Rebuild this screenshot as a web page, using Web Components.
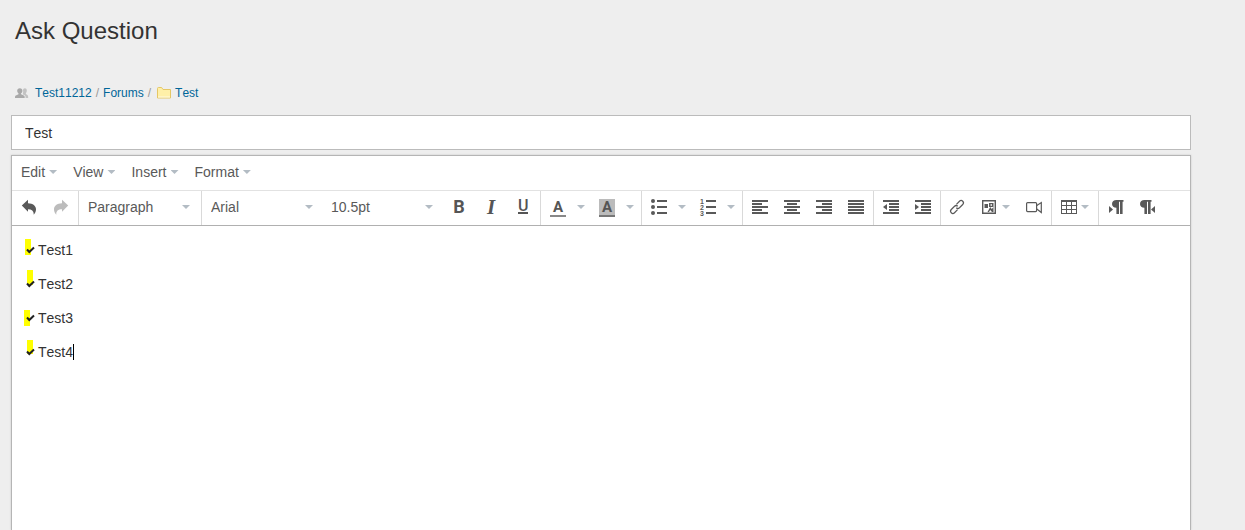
<!DOCTYPE html>
<html lang="en">
<head>
<meta charset="utf-8">
<title>Ask Question</title>
<style>
html, body { margin: 0; height: 100%; }
body { background: #eee; font-family: "Liberation Sans", Arial, sans-serif; font-kerning: none; color: #333; }
</style>
</head>
<body>
<ask-page></ask-page>
<script>
const define = (name, html, setup) => {
  const t = document.createElement('template');
  t.innerHTML = html;
  customElements.define(name, class extends HTMLElement {
    constructor() {
      super();
      this.attachShadow({ mode: 'open' });
    }
    connectedCallback() {
      if (this.shadowRoot.childNodes.length) return;
      this.shadowRoot.append(t.content.cloneNode(true));
      if (setup) setup(this, this.shadowRoot);
    }
  });
};

const bars = rows => '<path d="' + rows.map(([x, w], i) => `M${x} ${1 + i * 3}h${w}v2h-${w}z`).join('') + '"/>';
const undoPath = '<path d="M.8 6.500 7 .8v3.400c5 .1 8 2.600 8 6 0 2.200-.8 3.800-2.300 5.500.3-3.700-1.700-5.500-5.700-5.500v2.500z"/>';
const pilcrow = '<path d="M4.500 1H11.500v1.800H10.600V15H8V2.800H7V15H4.400V8.800C1.800 8.800 0 7.200 0 4.900S1.800 1 4.500 1z"/>';
const ICONS = {
  undo: undoPath,
  redo: `<g transform="matrix(-1 0 0 1 16 0)">${undoPath}</g>`,
  bullets: '<circle cx="2" cy="2" r="2"/><circle cx="2" cy="8" r="2"/><circle cx="2" cy="14" r="2"/><path d="M6 1h10v2H6zM6 7h10v2H6zM6 13h10v2H6z"/>',
  numbers: '<g font-size="7" font-weight="bold"><text x="0" y="5">1</text><text x="0" y="11">2</text><text x="0" y="17">3</text></g><path d="M6 1h10v2H6zM6 7h10v2H6zM6 13h10v2H6z"/>',
  left: bars([[0, 16], [0, 10], [0, 16], [0, 10], [0, 16]]),
  center: bars([[0, 16], [3, 10], [0, 16], [3, 10], [0, 16]]),
  right: bars([[0, 16], [6, 10], [0, 16], [6, 10], [0, 16]]),
  justify: bars([[0, 16], [0, 16], [0, 16], [0, 16], [0, 16]]),
  outdent: bars([[0, 16], [6, 10], [6, 10], [6, 10], [0, 16]]) + '<path d="M4 5v6L0 8z"/>',
  indent: bars([[0, 16], [6, 10], [6, 10], [6, 10], [0, 16]]) + '<path d="M0 5v6l4-3z"/>',
  link: '<g fill="none" stroke="#595959" stroke-width="1.200" transform="translate(-1) rotate(-45 8 8)"><path d="M6.500 10.300H2.200a2.300 2.300 0 0 1 0-4.600h4.600a2.300 2.300 0 0 1 2.200 2.300"/><path d="M9.500 5.700h4.300a2.300 2.300 0 0 1 0 4.600H9.200A2.300 2.300 0 0 1 7 8"/></g>',
  image: '<path d="M0 1h14v14H0zM1.400 2.400v11.200h11.200V2.400z" fill-rule="evenodd"/><path d="M2.500 5H6v4H2.500zM7 4h4.500v4H7zM8.500 5.300v1.400H10V5.300zM5.500 13l2.700-5 1.600 2 1.700-2v5h-1.500L8.200 11 7 13z" fill-rule="evenodd"/>',
  video: '<g fill="none" stroke="#595959" stroke-width="1.200"><rect x=".6" y="3.600" width="10" height="9" rx="1"/><path d="M10.800 6.500l4.500-3v10l-4.500-3.500"/></g>',
  table: '<path d="M0 1h16v14H0zM1 3v3h4V3zM6 3v3h4V3zM11 3v3h4V3zM1 7v3h4V7zM6 7v3h4V7zM11 7v3h4V7zM1 11v3h4v-3zM6 11v3h4v-3zM11 11v3h4v-3z" fill-rule="evenodd"/>',
  ltr: `<path d="M1 7v7l4-3.500z"/><g transform="translate(4)">${pilcrow}</g>`,
  rtl: `${pilcrow}<path d="M15 7v7l-4-3.500z"/>`,
  people: '<g fill="#a9a9a9"><circle cx="4.800" cy="5.800" r="2.600"/><path d="M3.500 7.500h2.600v1.700l2.700 1.300c.8.4.9 1 .9 2.500H0c0-1.500.1-2.100.9-2.500l2.600-1.300z"/></g><g fill="#c2c2c2"><path d="M8 5.200c0-1.300.8-2 1.900-2s1.900.8 1.900 2.200-.4 2-.9 2.600v1.100l1.500.9c.6.4.8 1.200.8 3h-2.600c0-1.600-.3-2.400-1.200-2.900L7.900 9.400V8.200C8.300 7.200 8.300 6.500 8 5.200z"/></g>',
  folder: '<path d="M2.500 3.500c0-.6.300-1 .9-1h3.200l1.400 2h7.500v8.500h-13z" fill="#fff0a8" stroke="#e5c766"/><path d="M3 11.500h12v1H3z" fill="#fffbe2"/>'
};

define('ui-icon', `<style>
:host { display: block; width: 16px; height: 16px; }
svg { display: block; fill: #595959; overflow: visible; }
</style><svg width="16" height="16" viewBox="0 0 16 16" aria-hidden="true"></svg>`, (el, root) => {
  root.querySelector('svg').innerHTML = ICONS[el.getAttribute('name')];
});

define('ui-caret', `<style>
:host { display: block; width: 8px; height: 4px; background: #b3bcc4; clip-path: polygon(0 0, 100% 0, 50% 100%); }
</style>`);

define('menu-button', `<style>
:host { display: block; }
button { display: flex; align-items: center; gap: 4px; margin: 0; padding: 0; border: 0; background: none; font: 14px/20px "Liberation Sans", Arial, sans-serif; font-kerning: none; color: #595959; }
</style><button type="button" aria-haspopup="true"><slot></slot><ui-caret></ui-caret></button>`);

/* Square icon button. "menu" adds a caret inside, "split" adds a separate caret button. */
define('tool-button', `<style>
:host { display: flex; height: 32px; }
button { display: flex; align-items: center; justify-content: center; margin: 0; padding: 0 8px; border: 0; background: none; color: #555; }
.main { gap: 4px; }
.open { width: 17px; padding: 0 6px 0 3px; }
:host([disabled]) .main { opacity: .4; }
[hidden] { display: none; }
</style><button class="main" type="button"><slot></slot><ui-caret class="inner" hidden></ui-caret></button><button class="open" type="button" hidden><ui-caret></ui-caret></button>`, (el, root) => {
  const label = el.getAttribute('label');
  const main = root.querySelector('.main'), open = root.querySelector('.open');
  main.setAttribute('aria-label', label);
  main.disabled = el.hasAttribute('disabled');
  open.setAttribute('aria-label', label + ' options');
  open.hidden = !el.hasAttribute('split');
  root.querySelector('.inner').hidden = !el.hasAttribute('menu');
});

define('letter-mark', `<style>
:host { display: block; width: 16px; text-align: center; font-family: Roboto, sans-serif; font-weight: 700; color: #555; }
span { display: block; box-sizing: border-box; }
.bold { font-size: 18px; line-height: 20px; }
.italic { font: italic 700 21px/20px "Liberation Serif", serif; }
.under { font-size: 16px; font-weight: 500; line-height: 12px; height: 14px; width: 10px; margin: 0 auto; border-bottom: 2px solid #555; }
.color, .fill { height: 18px; font-size: 15px; line-height: 16px; border-bottom: 2px solid #888; margin-top: 2px; }
.fill { background: #bbb; border-color: #777; }
</style><span><slot></slot></span>`, (el, root) => {
  root.querySelector('span').className = el.getAttribute('kind');
});

define('tool-select', `<style>
:host { display: grid; width: 120px; height: 32px; align-items: center; }
select, ui-caret { grid-area: 1 / 1; }
select { appearance: none; width: 100%; height: 32px; margin: 0; padding: 0 20px 0 8px; border: 0; background: none; font: 14px/20px "Liberation Sans", Arial, sans-serif; color: #595959; }
ui-caret { justify-self: end; margin-right: 10px; pointer-events: none; }
</style><select><option></option></select><ui-caret></ui-caret>`, (el, root) => {
  root.querySelector('select').setAttribute('aria-label', el.getAttribute('label'));
  root.querySelector('option').textContent = el.getAttribute('value');
});

define('tool-group', `<style>
:host { display: flex; padding: 0 1px 2px; border-right: 1px solid #d9d9d9; }
:host(:last-of-type) { border-right: 0; }
</style><slot></slot>`);

define('editor-toolbar', `<style>
:host { display: flex; border-top: 1px solid #e2e2e2; border-bottom: 1px solid #b0b0b0; }
</style>
<tool-group>
  <tool-button label="Undo"><ui-icon name="undo"></ui-icon></tool-button>
  <tool-button label="Redo" disabled><ui-icon name="redo"></ui-icon></tool-button>
</tool-group>
<tool-group><tool-select label="Block style" value="Paragraph"></tool-select></tool-group>
<tool-group>
  <tool-select label="Font family" value="Arial"></tool-select>
  <tool-select label="Font size" value="10.5pt"></tool-select>
  <tool-button label="Bold"><letter-mark kind="bold">B</letter-mark></tool-button>
  <tool-button label="Italic"><letter-mark kind="italic">I</letter-mark></tool-button>
  <tool-button label="Underline"><letter-mark kind="under">U</letter-mark></tool-button>
</tool-group>
<tool-group>
  <tool-button label="Text color" split><letter-mark kind="color">A</letter-mark></tool-button>
  <tool-button label="Background color" split><letter-mark kind="fill">A</letter-mark></tool-button>
</tool-group>
<tool-group>
  <tool-button label="Bullet list" split><ui-icon name="bullets"></ui-icon></tool-button>
  <tool-button label="Numbered list" split><ui-icon name="numbers"></ui-icon></tool-button>
</tool-group>
<tool-group>
  <tool-button label="Align left"><ui-icon name="left"></ui-icon></tool-button>
  <tool-button label="Align center"><ui-icon name="center"></ui-icon></tool-button>
  <tool-button label="Align right"><ui-icon name="right"></ui-icon></tool-button>
  <tool-button label="Justify"><ui-icon name="justify"></ui-icon></tool-button>
</tool-group>
<tool-group>
  <tool-button label="Decrease indent"><ui-icon name="outdent"></ui-icon></tool-button>
  <tool-button label="Increase indent"><ui-icon name="indent"></ui-icon></tool-button>
</tool-group>
<tool-group>
  <tool-button label="Link"><ui-icon name="link"></ui-icon></tool-button>
  <tool-button label="Image" menu><ui-icon name="image"></ui-icon></tool-button>
  <tool-button label="Video"><ui-icon name="video"></ui-icon></tool-button>
</tool-group>
<tool-group><tool-button label="Table" menu><ui-icon name="table"></ui-icon></tool-button></tool-group>
<tool-group>
  <tool-button label="Left to right"><ui-icon name="ltr"></ui-icon></tool-button>
  <tool-button label="Right to left"><ui-icon name="rtl"></ui-icon></tool-button>
</tool-group>`);

/* List marker: a check over a highlighter stroke placed by data x / y. */
define('check-mark', `<style>
:host { display: block; width: 16px; height: 20px; }
svg { display: block; overflow: visible; }
</style><svg width="16" height="20" viewBox="0 0 16 20" aria-hidden="true"><rect width="6" height="16" fill="#ff0"/><path d="M5 9.500l2.300 2.500L12 7.500" fill="none" stroke="#222" stroke-width="2"/></svg>`, (el, root) => {
  const r = root.querySelector('rect');
  r.setAttribute('x', el.dataset.x);
  r.setAttribute('y', el.dataset.y);
  r.setAttribute('height', el.dataset.h);
});

define('editor-body', `<style>
:host { display: block; flex: 1; }
div { height: 100%; box-sizing: border-box; padding: 14px 10px; outline: 0; }
ul { list-style: none; margin: 0; padding: 0; display: grid; gap: 14px; font-size: 14px; line-height: 20px; color: #333; }
li { display: flex; align-items: center; height: 20px; }
i { width: 1px; height: 16px; background: #000; }
</style><div contenteditable="true" role="textbox" aria-label="Question body" aria-multiline="true" spellcheck="false"><ul>
<li><check-mark data-x="3" data-y="-1" data-h="16"></check-mark>Test1</li>
<li><check-mark data-x="5" data-y="-4" data-h="15"></check-mark>Test2</li>
<li><check-mark data-x="2" data-y="2" data-h="16"></check-mark>Test3</li>
<li><check-mark data-x="5" data-y="-2" data-h="14"></check-mark>Test4<i></i></li>
</ul></div>`);

define('rich-editor', `<style>
:host { flex: 1; display: flex; flex-direction: column; background: #fff; border: 1px solid #b5b5b5; border-bottom: 0; box-shadow: 0 0 2px rgba(0,0,0,.15); }
nav { display: flex; align-items: center; gap: 16px; height: 34px; padding: 0 9px 2px; box-sizing: border-box; }
</style>
<nav aria-label="Editor menu"><menu-button>Edit</menu-button><menu-button>View</menu-button><menu-button>Insert</menu-button><menu-button>Format</menu-button></nav>
<editor-toolbar></editor-toolbar><editor-body></editor-body>`);

define('bread-crumbs', `<style>
:host { display: block; }
nav { display: flex; align-items: center; gap: 4px; font-size: 12px; line-height: 16px; color: #999; }
a { color: #006699; text-decoration: none; }
</style><nav aria-label="Breadcrumb"><ui-icon name="people"></ui-icon><a href="#group">Test11212</a><span>/</span><a href="#forums">Forums</a><span>/</span><ui-icon name="folder"></ui-icon><a href="#test">Test</a></nav>`);

define('title-field', `<style>
:host { display: block; }
input { display: block; box-sizing: border-box; width: 100%; height: 35px; margin: 0; padding: 0 13px; border: 1px solid #bbb; border-radius: 0; background: #fff; font: 14px/20px "Liberation Sans", Arial, sans-serif; font-kerning: none; color: #333; outline: 0; }
</style><input type="text" aria-label="Question title" value="Test">`);

define('ask-page', `<style>
:host { display: flex; flex-direction: column; box-sizing: border-box; height: 100vh; min-height: 400px; overflow: hidden; padding: 17px 54px 0 11px; }
h1 { margin: 0 4px 40px; font-size: 24px; line-height: 28px; font-weight: 400; color: #333; }
bread-crumbs { margin: 0 4px 14px; }
title-field { margin-bottom: 5px; }
</style><h1>Ask Question</h1><bread-crumbs></bread-crumbs><title-field></title-field><rich-editor></rich-editor>`);
</script>
</body>
</html>
